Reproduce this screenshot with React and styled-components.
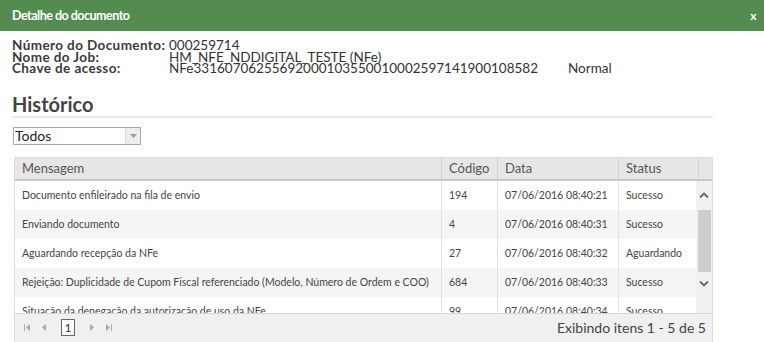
import styled, { createGlobalStyle } from 'styled-components';

const GlobalStyle = createGlobalStyle`
  body {
    margin: 0;
    background: #fff;
    font-family: Lato, "Open Sans", "Liberation Sans", sans-serif;
  }
`;

const rows = [
  { msg: 'Documento enfileirado na fila de envio', code: '194', date: '07/06/2016 08:40:21', status: 'Sucesso' },
  { msg: 'Enviando documento', code: '4', date: '07/06/2016 08:40:31', status: 'Sucesso' },
  { msg: 'Aguardando recepção da NFe', code: '27', date: '07/06/2016 08:40:32', status: 'Aguardando' },
  { msg: 'Rejeição: Duplicidade de Cupom Fiscal referenciado (Modelo, Número de Ordem e COO)', code: '684', date: '07/06/2016 08:40:33', status: 'Sucesso' },
  { msg: 'Situação da denegação da autorização de uso da NFe', code: '99', date: '07/06/2016 08:40:34', status: 'Sucesso' },
];

const cols = ['426px', '56px', '121px', '80px'];

const Chevron = ({ down }) => (
  <svg width="10" height="7" viewBox="0 0 10 7">
    <path d={down ? 'M1 1.5 L5 5.5 L9 1.5' : 'M1 5.5 L5 1.5 L9 5.5'} fill="none" stroke="#666" strokeWidth="1.8" />
  </svg>
);

const PagerIcon = ({ kind }) => {
  const tri = kind === 'first' || kind === 'prev' ? 'M7 1 L3 4.5 L7 8 Z' : 'M3 1 L7 4.5 L3 8 Z';
  const bar = kind === 'first' ? 'M1.5 1 V8' : kind === 'last' ? 'M8.5 1 V8' : null;
  return (
    <svg width="10" height="9" viewBox="0 0 10 9">
      <path d={tri} fill="#aaa" />
      {bar && <path d={bar} stroke="#aaa" strokeWidth="1" />}
    </svg>
  );
};

const App = () => {
  return (
    <S.Dialog>
      <GlobalStyle />
      <S.TitleBar>
        <span>Detalhe do documento</span>
        <S.Close>x</S.Close>
      </S.TitleBar>
      <S.Content>
        <S.Info>
          <S.Label>Número do Documento:</S.Label>
          <S.Value>000259714</S.Value>
          <S.Label>Nome do Job:</S.Label>
          <S.Value>HM_NFE_NDDIGITAL_TESTE (NFe)</S.Value>
          <S.Label>Chave de acesso:</S.Label>
          <S.Value>
            NFe33160706255692000103550010002597141900108582
            <S.Kind>Normal</S.Kind>
          </S.Value>
        </S.Info>
        <S.Heading>Histórico</S.Heading>
        <S.Select>
          <span>Todos</span>
          <S.SelectArrow>
            <svg width="7" height="4" viewBox="0 0 7 4"><path d="M0 0 H7 L3.5 4 Z" fill="#999" /></svg>
          </S.SelectArrow>
        </S.Select>
        <S.Grid>
          <S.HeadRow>
            <S.HeadCell $w={cols[0]}>Mensagem</S.HeadCell>
            <S.HeadCell $w={cols[1]}>Código</S.HeadCell>
            <S.HeadCell $w={cols[2]}>Data</S.HeadCell>
            <S.HeadCell $w={cols[3]}>Status</S.HeadCell>
            <S.HeadCell $w="16px" />
          </S.HeadRow>
          <S.Body>
            <S.Rows>
              {rows.map((r, i) => (
                <S.Row key={i} $alt={i % 2 === 1}>
                  <S.Cell $w={cols[0]}>{r.msg}</S.Cell>
                  <S.Cell $w={cols[1]}>{r.code}</S.Cell>
                  <S.Cell $w={cols[2]}>{r.date}</S.Cell>
                  <S.Cell $w={cols[3]}>{r.status}</S.Cell>
                </S.Row>
              ))}
            </S.Rows>
            <S.Scrollbar>
              <S.ScrollBtn $h="29px"><Chevron /></S.ScrollBtn>
              <S.Thumb />
              <S.ScrollBtn $h="24px"><Chevron down /></S.ScrollBtn>
            </S.Scrollbar>
          </S.Body>
          <S.Pager>
            <S.PagerNav>
              <PagerIcon kind="first" />
              <PagerIcon kind="prev" />
              <S.Page>1</S.Page>
              <PagerIcon kind="next" />
              <PagerIcon kind="last" />
            </S.PagerNav>
            <S.PagerInfo>Exibindo itens 1 - 5 de 5</S.PagerInfo>
          </S.Pager>
        </S.Grid>
      </S.Content>
    </S.Dialog>
  );
};

export default App;

const S = {
  Dialog: styled.div`
    width: 764px;
    height: 342px;
    overflow: hidden;
    background: #fff;
  `,
  TitleBar: styled.div`
    height: 31px;
    background: #548c50;
    color: #fff;
    display: flex;
    align-items: center;
    justify-content: space-between;
    padding: 0 8px 0 12px;
    font-size: 12.5px;
    letter-spacing: -0.5px;
    font-weight: 700;
  `,
  Close: styled.span`
    font-size: 12px;
    font-weight: 700;
  `,
  Content: styled.div`
    padding: 9px 51px 0 12px;
  `,
  Info: styled.div`
    display: grid;
    grid-template-columns: 157px auto;
    line-height: 11.5px;
    color: #333;
  `,
  Label: styled.div`
    font-size: 13.5px;
    font-weight: 700;
    letter-spacing: 0.4px;
    color: #3a3a3a;
    white-space: nowrap;
  `,
  Value: styled.div`
    font-size: 13.5px;
    color: #333;
  `,
  Kind: styled.span`
    margin-left: 30px;
  `,
  Heading: styled.div`
    margin-top: 18px;
    padding: 0 0 1px 0;
    font-size: 20px;
    font-weight: 700;
    line-height: 22px;
    color: #444;
    border-bottom: 2px solid #e8e8e8;
  `,
  Select: styled.div`
    margin: 9px 0 0 1px;
    width: 128px;
    height: 18px;
    border: 1px solid #aaa;
    box-sizing: border-box;
    display: flex;
    align-items: center;
    justify-content: space-between;
    padding-left: 1px;
    font-size: 14px;
    color: #222;
  `,
  SelectArrow: styled.span`
    width: 14px;
    height: 100%;
    background: #eee;
    border-left: 1px solid #ddd;
    display: flex;
    align-items: center;
    justify-content: center;
  `,
  Grid: styled.div`
    margin: 12px 0 0 2px;
    border: 1px solid #ddd;
    width: 699px;
    box-sizing: border-box;
  `,
  HeadRow: styled.div`
    display: flex;
    height: 23px;
    background: #e6e6e6;
    border-bottom: 2px solid #c8c8c8;
    box-sizing: border-box;
  `,
  HeadCell: styled.div`
    width: ${p => p.$w};
    flex: none;
    box-sizing: border-box;
    padding-left: 7px;
    font-size: 13px;
    color: #555;
    display: flex;
    align-items: center;
    border-left: 1px solid #d2d2d2;
    &:first-child { border-left: none; }
  `,
  Body: styled.div`
    display: flex;
    height: 132px;
    overflow: hidden;
  `,
  Rows: styled.div`
    width: 681px;
    flex: none;
  `,
  Row: styled.div`
    display: flex;
    height: 29px;
    background: ${p => (p.$alt ? '#f5f5f5' : '#fff')};
  `,
  Cell: styled.div`
    width: ${p => p.$w};
    flex: none;
    box-sizing: border-box;
    padding-left: 7px;
    font-size: 10.5px;
    color: #444;
    display: flex;
    align-items: center;
    white-space: nowrap;
    overflow: hidden;
    border-left: 1px solid #e2e2e2;
    &:first-child { border-left: none; }
  `,
  Scrollbar: styled.div`
    width: 16px;
    flex: none;
    background: #f1f1f1;
    display: flex;
    flex-direction: column;
  `,
  ScrollBtn: styled.div`
    height: ${p => p.$h};
    display: flex;
    align-items: center;
    justify-content: center;
    flex: none;
  `,
  Thumb: styled.div`
    height: 62px;
    margin: 0 1px 0 2px;
    background: #cdcdcd;
    flex: none;
  `,
  Pager: styled.div`
    height: 28px;
    background: #f0f0f0;
    border-top: 1px solid #d6d6d6;
    display: flex;
    align-items: center;
    justify-content: space-between;
    padding: 0 6px 0 8px;
  `,
  PagerNav: styled.div`
    display: flex;
    align-items: center;
    gap: 6px;
  `,
  Page: styled.span`
    width: 12px;
    height: 15px;
    border: 1px solid #666;
    background: #fff;
    font-size: 12px;
    color: #333;
    display: flex;
    align-items: center;
    justify-content: center;
    margin: 0 6px;
  `,
  PagerInfo: styled.span`
    font-size: 14px;
    color: #444;
  `,
};
